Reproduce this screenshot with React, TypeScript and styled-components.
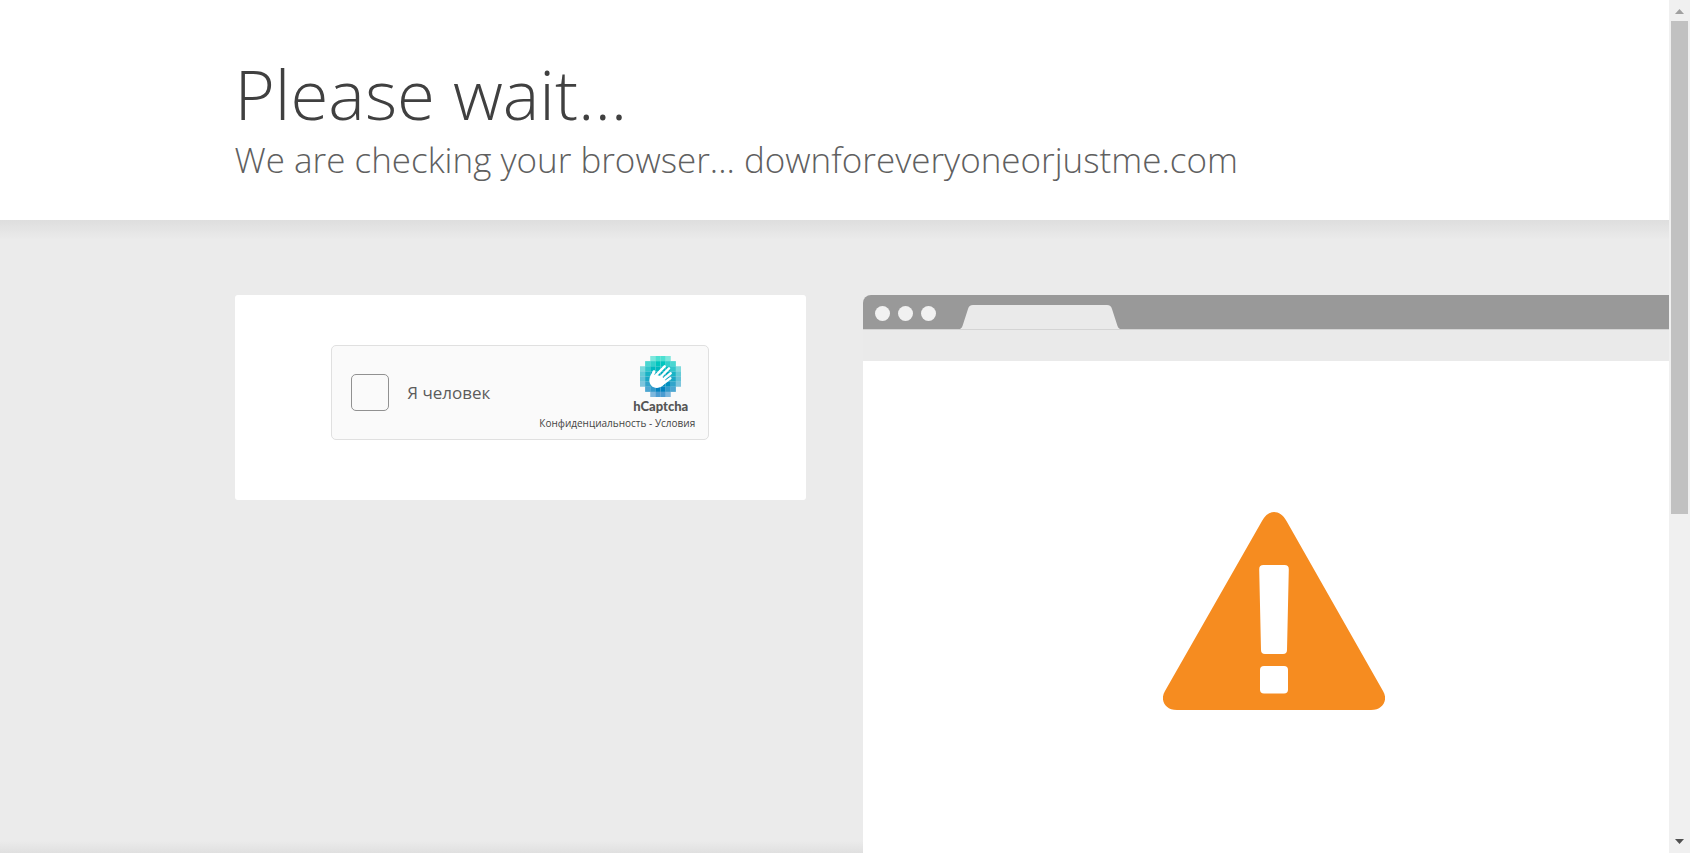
import React from 'react';
import styled, { createGlobalStyle } from 'styled-components';

const GlobalStyle = createGlobalStyle`
  * { box-sizing: border-box; }
  html, body, #root { height: 100%; }
  body { margin: 0; font-family: 'Open Sans', 'Noto Sans', sans-serif; background: #fff; }
`;

const Shell = styled.div`
  display: grid;
  grid-template-columns: minmax(0, 1fr) 21px;
  height: 100vh;
  overflow: hidden;
`;

const Page = styled.div`
  display: flex;
  flex-direction: column;
  min-height: 0;
  overflow: hidden;
`;

const Container = styled.div`
  width: 100%;
  max-width: 1200px;
  margin: 0 auto;
`;

const Header = styled.header`
  flex: none;
  padding: 49px 0 38px;
  background: #fff;
`;

const Title = styled.h1`
  margin: 0;
  color: #404040;
  font-size: 69px;
  font-weight: 300;
  line-height: 88px;
  white-space: nowrap;
`;

const Subtitle = styled.h2`
  margin: 0;
  color: #606060;
  font-size: 35px;
  font-weight: 300;
  line-height: 45px;
  white-space: nowrap;
`;

const Band = styled.main`
  flex: 1;
  min-height: 0;
  padding-top: 75px;
  background:
    linear-gradient(to bottom, #dedede, #ebebeb) top / 100% 20px no-repeat,
    linear-gradient(to top, #e0e0e0, #ebebeb) bottom / 100% 12px no-repeat,
    #ebebeb;
`;

const Columns = styled(Container)`
  display: grid;
  grid-template-columns: 1fr 1fr;
  gap: 57px;
  height: 100%;
`;

const Card = styled.section`
  align-self: start;
  display: flex;
  justify-content: center;
  padding: 50px 0 60px;
  border-radius: 3px;
  background: #fff;
`;

const Captcha = styled.div`
  display: flex;
  align-items: center;
  width: 378px;
  height: 95px;
  padding: 0 13px 0 19px;
  border: 1px solid #e0e0e0;
  border-radius: 5px;
  background: #fafafa;
`;

const CheckLabel = styled.label`
  display: flex;
  align-items: center;
  gap: 18px;
  color: #5c5c5c;
  font-size: 17px;
  line-height: 24px;
  white-space: nowrap;
`;

const Checkbox = styled.input`
  appearance: none;
  width: 38px;
  height: 37px;
  margin: 0;
  border: 1px solid #919191;
  border-radius: 5px;
  background: #fafafa;
`;

const Brand = styled.div`
  display: flex;
  flex-direction: column;
  align-items: flex-end;
  margin-left: auto;
`;

const LogoLink = styled.a`
  display: flex;
  flex-direction: column;
  align-items: center;
  margin-right: 7px;
  color: #555;
  font: 900 13px/18px Lato, sans-serif;
  text-decoration: none;
`;

const Legal = styled.div`
  margin-top: 1px;
  color: #444;
  font-size: 10px;
  line-height: 14px;
  white-space: nowrap;

  a { color: inherit; text-decoration: none; }
`;

const BrowserFrame = styled.section`
  display: flex;
  flex-direction: column;
  width: 144%;
  height: 100%;
`;

const TabBar = styled.div`
  display: flex;
  flex: none;
  align-items: flex-end;
  height: 35px;
  padding-left: 12px;
  border-bottom: 1px solid #d4d4d4;
  border-radius: 8px 0 0 0;
  background: #999;
`;

const Dots = styled.div`
  display: flex;
  gap: 8px;
  margin-right: 24px;
  padding-bottom: 8px;
`;

const Dot = styled.span`
  width: 15px;
  height: 15px;
  border-radius: 50%;
  background: #f1f1f1;
`;

const Toolbar = styled.div`
  flex: none;
  height: 31px;
  background: #eaeaea;
`;

const Viewport = styled.div`
  display: flex;
  flex: 1;
  justify-content: center;
  padding-top: 151px;
  background: #fff;

  svg { flex: none; }
`;

const Scrollbar = styled.div`
  display: flex;
  flex-direction: column;
  align-items: center;
  justify-content: space-between;
  background: #f0f0f0;

  svg { flex: none; display: block; }
`;

const Thumb = styled.div`
  width: 17px;
  height: calc(58% - 2px);
  margin-bottom: auto;
  background: #c1c1c1;
`;

const rows = [
  { color: '#00d4bf', alpha: [0, 0, 0.5, 0.7, 0.7, 0.5, 0, 0] },
  { color: '#00c6bf', alpha: [0, 0.7, 0.8, 1, 1, 0.8, 0.7, 0] },
  { color: '#00b9bf', alpha: [0.5, 0.8, 1, 1, 1, 1, 0.8, 0.5] },
  { color: '#00abbf', alpha: [0.6, 0.9, 1, 1, 1, 1, 0.9, 0.6] },
  { color: '#009dbf', alpha: [0.6, 0.9, 1, 1, 1, 1, 0.9, 0.6] },
  { color: '#008fbf', alpha: [0.5, 0.8, 1, 1, 1, 1, 0.8, 0.5] },
  { color: '#0082bf', alpha: [0, 0.7, 0.8, 1, 1, 0.8, 0.7, 0] },
  { color: '#0074bf', alpha: [0, 0, 0.5, 0.7, 0.7, 0.5, 0, 0] },
];

function CaptchaLogo() {
  return (
    <svg width="41" height="41" viewBox="0 0 123 123" aria-hidden="true">
      {rows.map((row, y) =>
        row.alpha.map((a, x) =>
          a ? (
            <rect key={`${x}-${y}`} x={x * 15.375} y={y * 15.375} width="15.375" height="15.375" fill={row.color} fillOpacity={a} />
          ) : null,
        ),
      )}
      <path
        d="M28 73C28 61 34 55 37 47C39 41 47 41 46 48L43 57L50 57L66 61L76 74L74 82C68 91 60 96 51 96C37 96 28 86 28 73Z"
        fill="#fff"
      />
      <g stroke="#fff" strokeWidth="7.5" strokeLinecap="round">
        <path d="M74 31L47 59" />
        <path d="M87 37L56 69" />
        <path d="M92 52L62 77" />
        <path d="M91 67L67 85" />
      </g>
    </svg>
  );
}

function WarningSign() {
  return (
    <svg width="222" height="198" viewBox="0 0 222 198" role="img" aria-label="Warning">
      <path
        d="M99 9C105-3 117-3 123.500 9L220 179C225 187 221 198 208 198H14C1 198-3 187 2 179Z"
        fill="#f68c20"
      />
      <path d="M100.500 53H121.500Q126 53 125.800 57.500L124 138Q124 142 120 142H102Q98 142 98 138L96.200 57.500Q96 53 100.500 53Z" fill="#fff" />
      <rect x="97" y="154" width="28" height="27.500" rx="4" fill="#fff" />
    </svg>
  );
}

export default function App() {
  return (
    <>
      <GlobalStyle />
      <Shell>
        <Page>
          <Header>
            <Container>
              <Title>Please wait...</Title>
              <Subtitle>We are checking your browser... downforeveryoneorjustme.com</Subtitle>
            </Container>
          </Header>
          <Band>
            <Columns>
              <Card>
                <Captcha>
                  <CheckLabel>
                    <Checkbox type="checkbox" />
                    Я человек
                  </CheckLabel>
                  <Brand>
                    <LogoLink href="#hcaptcha">
                      <CaptchaLogo />
                      hCaptcha
                    </LogoLink>
                    <Legal>
                      <a href="#privacy">Конфиденциальность</a> - <a href="#terms">Условия</a>
                    </Legal>
                  </Brand>
                </Captcha>
              </Card>
              <BrowserFrame>
                <TabBar>
                  <Dots>
                    <Dot />
                    <Dot />
                    <Dot />
                  </Dots>
                  <svg width="160" height="24" viewBox="0 0 160 24" aria-hidden="true">
                    <path d="M0 24Q2 23 2.500 21L8 4Q9 0 13 0H147Q151 0 152 4L157.500 21Q158 23 160 24Z" fill="#eaeaea" />
                  </svg>
                </TabBar>
                <Toolbar />
                <Viewport>
                  <WarningSign />
                </Viewport>
              </BrowserFrame>
            </Columns>
          </Band>
        </Page>
        <Scrollbar aria-hidden="true">
          <svg width="21" height="21" viewBox="0 0 21 21">
            <path d="M6 14L10.500 9L15 14Z" fill="#a0a0a0" />
          </svg>
          <Thumb />
          <svg width="21" height="21" viewBox="0 0 21 21">
            <path d="M6 7L10.500 12L15 7Z" fill="#505050" />
          </svg>
        </Scrollbar>
      </Shell>
    </>
  );
}
